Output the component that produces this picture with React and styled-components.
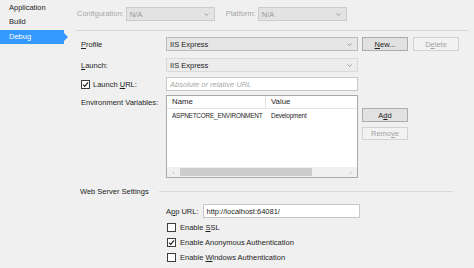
import styled, { createGlobalStyle } from "styled-components";

const Global = createGlobalStyle`
  html, body {
    margin: 0;
    padding: 0;
    background: #f0f0f0;
  }
  body {
    font-family: "Liberation Sans", Arial, sans-serif;
    font-size: 7.5px;
    color: #1e1e1e;
  }
`;

const Window = styled.div`
  width: 474px;
  height: 268px;
  display: flex;
  background: #f0f0f0;
  overflow: hidden;
`;

const Sidebar = styled.div`
  width: 72px;
  flex-shrink: 0;
  display: flex;
  flex-direction: column;
  padding-top: 1px;
`;

const NavItem = styled.div`
  position: relative;
  width: 64px;
  height: 14px;
  line-height: 14px;
  padding-left: 9px;
  box-sizing: border-box;
  color: ${(p) => (p.$active ? "#ffffff" : "#1e1e1e")};
  background: ${(p) => (p.$active ? "#3399ff" : "transparent")};
  margin-top: ${(p) => (p.$active ? "1px" : "0")};
  &::after {
    content: "";
    display: ${(p) => (p.$active ? "block" : "none")};
    position: absolute;
    right: -4px;
    top: 3px;
    border-top: 4px solid transparent;
    border-bottom: 4px solid transparent;
    border-left: 4px solid #3399ff;
  }
`;

const Content = styled.div`
  flex: 1;
  display: flex;
  flex-direction: column;
`;

const TopBar = styled.div`
  height: 30px;
  display: flex;
  align-items: flex-start;
  padding: 7px 0 0 5px;
  box-sizing: border-box;
  color: #a6a6a6;
`;

const TopLabel = styled.span`
  line-height: 14px;
  margin-left: ${(p) => p.$ml || 0}px;
  margin-right: ${(p) => p.$mr || 2}px;
`;

const Panel = styled.div`
  margin: 0 6px 0 4px;
  border-top: 1px solid #d4d4d4;
  padding: 6px 0 0 5px;
  display: flex;
  flex-direction: column;
`;

const Row = styled.div`
  display: grid;
  grid-template-columns: 81px 192px auto;
  column-gap: 4px;
  align-items: start;
  margin-top: ${(p) => p.$mt || 0}px;
`;

const Label = styled.div`
  display: flex;
  align-items: center;
  gap: 3px;
  height: 14px;
  white-space: nowrap;
`;

const Key = styled.span`
  text-decoration: underline;
  text-underline-offset: 1px;
`;

const Combo = styled.div`
  width: ${(p) => p.$w || 192}px;
  height: 14px;
  box-sizing: border-box;
  display: flex;
  align-items: center;
  justify-content: space-between;
  padding: 0 5px 0 3px;
  border: 1px solid ${(p) => (p.$soft ? "#d9d9d9" : p.$off ? "#cccccc" : "#bcbcbc")};
  background: ${(p) => (p.$off ? "#e3e3e3" : p.$soft ? "#ececec" : "#e6e6e6")};
  color: ${(p) => (p.$off ? "#9a9a9a" : "#1e1e1e")};
  svg {
    flex-shrink: 0;
  }
`;

const TextBox = styled.div`
  width: ${(p) => p.$w || 192}px;
  height: 14px;
  box-sizing: border-box;
  display: flex;
  align-items: center;
  padding: 0 3px;
  border: 1px solid #c8c8c8;
  background: #ffffff;
  color: ${(p) => (p.$placeholder ? "#a8a8a8" : "#1e1e1e")};
  font-style: ${(p) => (p.$placeholder ? "italic" : "normal")};
`;

const Buttons = styled.div`
  display: flex;
  flex-direction: ${(p) => (p.$column ? "column" : "row")};
  gap: 5px;
  padding-top: ${(p) => p.$pt || 0}px;
`;

const Button = styled.div`
  width: 46px;
  height: ${(p) => p.$h || 14}px;
  box-sizing: border-box;
  display: flex;
  align-items: center;
  justify-content: center;
  border: 1px solid ${(p) => (p.$off ? "#d2d2d2" : "#adadad")};
  background: ${(p) => (p.$off ? "#f2f2f2" : "#e1e1e1")};
  color: ${(p) => (p.$off ? "#a3a3a3" : "#1e1e1e")};
`;

const Grid = styled.div`
  width: 192px;
  height: 83px;
  box-sizing: border-box;
  border: 1px solid #a9a9a9;
  background: #ffffff;
  display: flex;
  flex-direction: column;
`;

const GridRow = styled.div`
  display: grid;
  grid-template-columns: 99px 1fr;
  height: ${(p) => (p.$head ? 12 : 13)}px;
  border-bottom: 1px solid ${(p) => (p.$head ? "#e5e5e5" : "transparent")};
  & > span {
    padding-left: 5px;
    line-height: ${(p) => (p.$head ? 12 : 13)}px;
    white-space: nowrap;
    overflow: hidden;
  }
  & > span:first-child {
    border-right: 1px solid ${(p) => (p.$head ? "#e5e5e5" : "transparent")};
  }
`;

const GridHeadCell = styled.span`
  font-size: 7.8px;
`;

const GridCell = styled.span`
  font-size: 6.4px;
  letter-spacing: -0.2px;
`;

const GridBody = styled.div`
  flex: 1;
`;

const HScroll = styled.div`
  height: 10px;
  display: flex;
  align-items: center;
  background: #f0f0f0;
  color: #a0a0a0;
  font-size: 6px;
`;

const ScrollArrow = styled.span`
  width: 13px;
  text-align: center;
`;

const ScrollTrack = styled.div`
  flex: 1;
  height: 8px;
  display: flex;
`;

const Thumb = styled.div`
  width: 132px;
  height: 100%;
  background: #cdcdcd;
`;

const Section = styled.div`
  display: flex;
  align-items: center;
  gap: 10px;
  margin: 7px 15px 0 -1px;
  height: 12px;
  &::after {
    content: "";
    flex: 1;
    height: 1px;
    background: #d9d9d9;
  }
`;

const Indent = styled.div`
  padding-left: 85px;
  display: flex;
  flex-direction: column;
  margin-top: ${(p) => p.$mt || 0}px;
  gap: ${(p) => p.$gap || 0}px;
`;

const Inline = styled.div`
  display: flex;
  align-items: center;
  gap: 4px;
`;

const CheckRow = styled.label`
  display: flex;
  align-items: center;
  gap: 4px;
  height: 10px;
  padding-left: 1px;
`;

const Box = styled.span`
  width: 9px;
  height: 9px;
  box-sizing: border-box;
  border: 1px solid #3c3c3c;
  background: #ffffff;
  display: flex;
  align-items: center;
  justify-content: center;
`;

const Chevron = () => (
  <svg width="5" height="3" viewBox="0 0 5 3">
    <path d="M0.5 0.5 L2.5 2.5 L4.5 0.5" fill="none" stroke="#8a8a8a" strokeWidth="0.8" />
  </svg>
);

const Check = ({ checked }) => (
  <Box>
    {checked && (
      <svg width="7" height="7" viewBox="0 0 7 7">
        <path d="M1 3.6 L2.8 5.4 L6 1.4" fill="none" stroke="#222" strokeWidth="1.2" />
      </svg>
    )}
  </Box>
);

export default function App() {
  return (
    <Window>
      <Global />
      <Sidebar>
        <NavItem>Application</NavItem>
        <NavItem>Build</NavItem>
        <NavItem $active>Debug</NavItem>
      </Sidebar>
      <Content>
        <TopBar>
          <TopLabel>Configuration:</TopLabel>
          <Combo $w={89} $off>
            <span>N/A</span>
            <Chevron />
          </Combo>
          <TopLabel $ml={11} $mr={2}>
            Platform:
          </TopLabel>
          <Combo $w={89} $off>
            <span>N/A</span>
            <Chevron />
          </Combo>
        </TopBar>
        <Panel>
          <Row>
            <Label>
              <span>
                <Key>P</Key>rofile
              </span>
            </Label>
            <Combo>
              <span>IIS Express</span>
              <Chevron />
            </Combo>
            <Buttons>
              <Button>
                <span>
                  <Key>N</Key>ew...
                </span>
              </Button>
              <Button $off>
                <span>
                  D<Key>e</Key>lete
                </span>
              </Button>
            </Buttons>
          </Row>
          <Row $mt={7}>
            <Label>
              <span>
                <Key>L</Key>aunch:
              </span>
            </Label>
            <Combo $soft>
              <span>IIS Express</span>
              <Chevron />
            </Combo>
          </Row>
          <Row $mt={5}>
            <Label>
              <Check checked />
              <span>
                Launch <Key>U</Key>RL:
              </span>
            </Label>
            <TextBox $placeholder>Absolute or relative URL</TextBox>
          </Row>
          <Row $mt={4}>
            <Label>Environment Variables:</Label>
            <Grid>
              <GridRow $head>
                <GridHeadCell>Name</GridHeadCell>
                <GridHeadCell>Value</GridHeadCell>
              </GridRow>
              <GridRow>
                <GridCell>ASPNETCORE_ENVIRONMENT</GridCell>
                <GridCell>Development</GridCell>
              </GridRow>
              <GridBody />
              <HScroll>
                <ScrollArrow>‹</ScrollArrow>
                <ScrollTrack>
                  <Thumb />
                </ScrollTrack>
                <ScrollArrow>›</ScrollArrow>
              </HScroll>
            </Grid>
            <Buttons $column $pt={13}>
              <Button>
                <span>
                  A<Key>d</Key>d
                </span>
              </Button>
              <Button $off $h={13}>
                <span>
                  Remo<Key>v</Key>e
                </span>
              </Button>
            </Buttons>
          </Row>
          <Section>Web Server Settings</Section>
          <Indent $mt={7}>
            <Inline>
              <span>
                A<Key>p</Key>p URL:
              </span>
              <TextBox $w={157}>http://localhost:64081/</TextBox>
            </Inline>
          </Indent>
          <Indent $mt={4} $gap={5}>
            <CheckRow>
              <Check />
              <span>
                Enable <Key>S</Key>SL
              </span>
            </CheckRow>
            <CheckRow>
              <Check checked />
              <span>Enable Anonymous Authentication</span>
            </CheckRow>
            <CheckRow>
              <Check />
              <span>
                Enable <Key>W</Key>indows Authentication
              </span>
            </CheckRow>
          </Indent>
        </Panel>
      </Content>
    </Window>
  );
}
